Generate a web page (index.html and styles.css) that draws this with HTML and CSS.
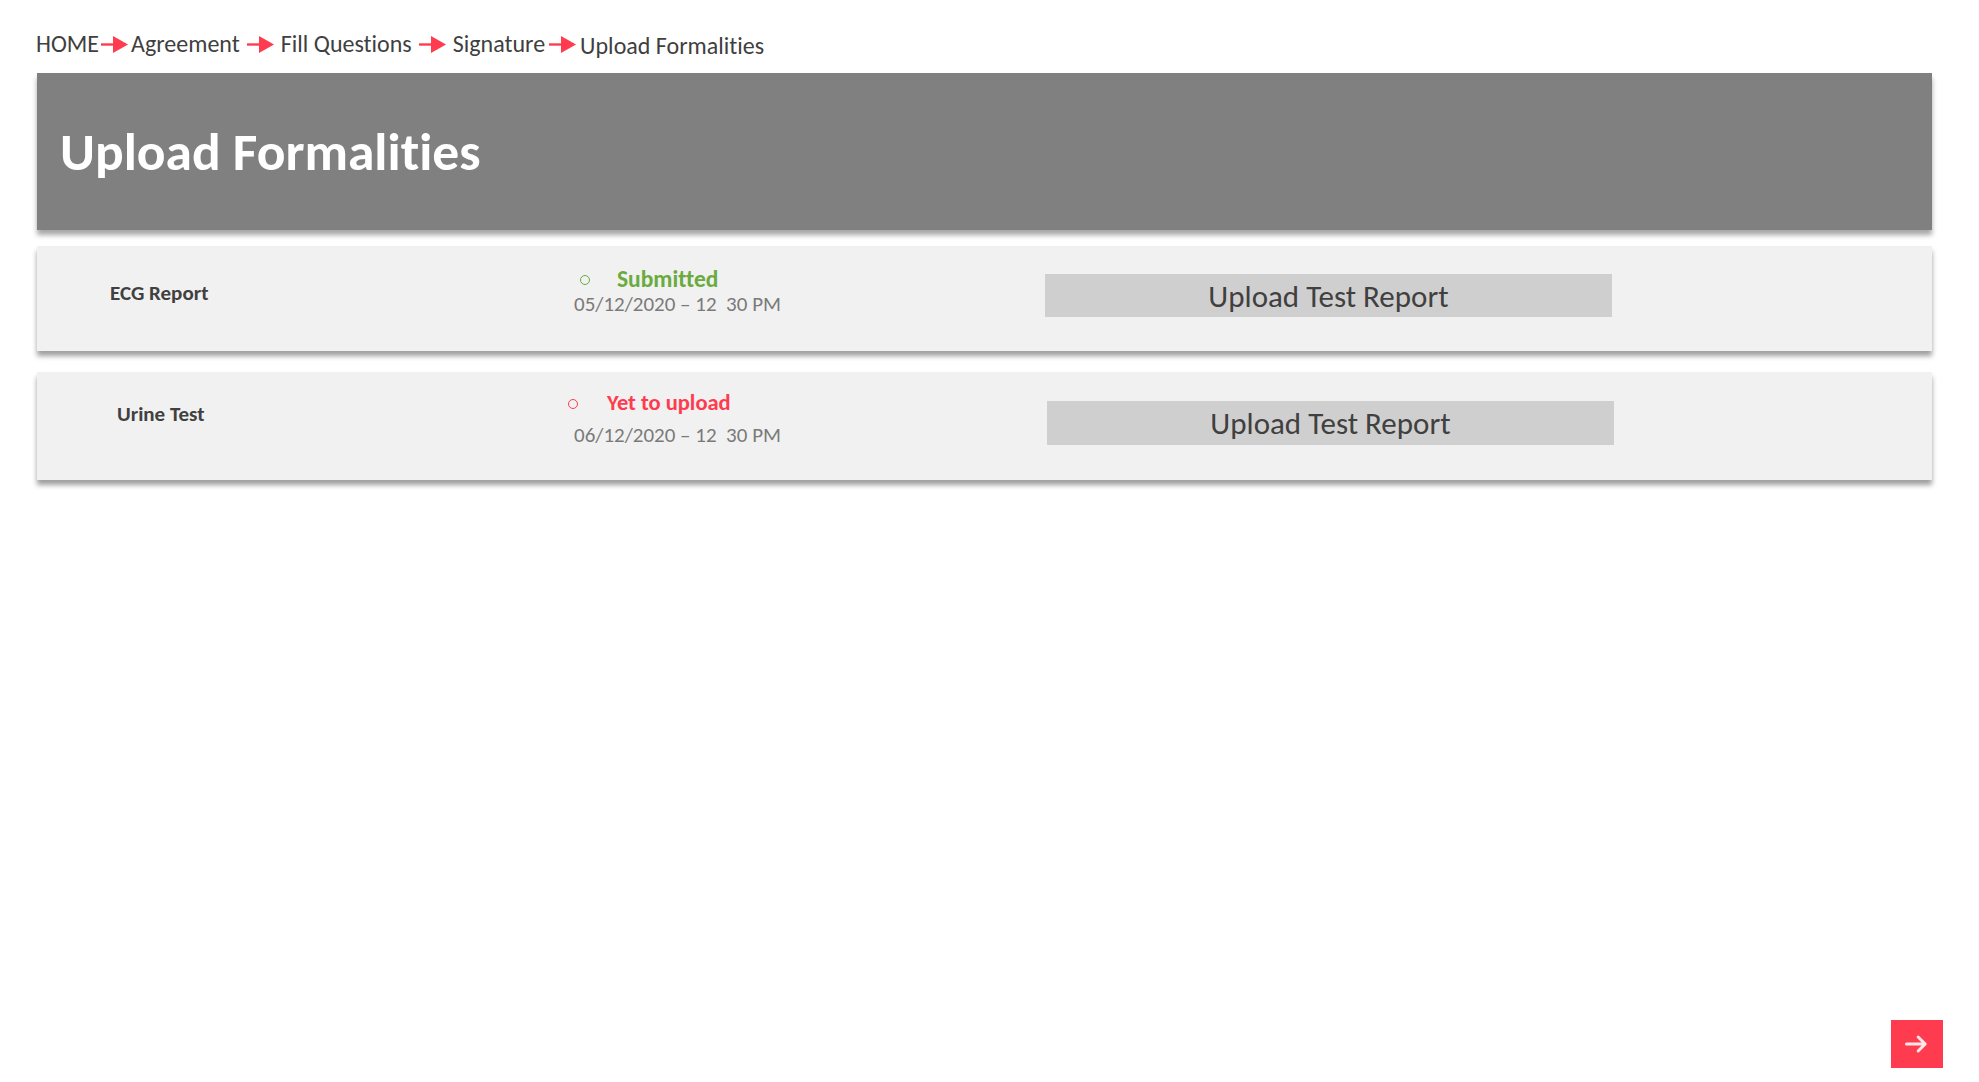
FILE: index.html
```html
<!DOCTYPE html>
<html lang="en">
<head>
<meta charset="utf-8">
<title>Upload Formalities</title>
<link rel="stylesheet" href="styles.css">
</head>
<body>
<div class="page">
  <nav class="crumbs">
    <span class="crumb">HOME</span>
    <svg class="arr first" viewBox="0 0 27 18"><path d="M0 9.5h14" stroke="#ff3b4f" stroke-width="2.4"/><path d="M12 1l15 8.5-15 8.5z" fill="#ff3b4f"/></svg>
    <span class="crumb">Agreement</span>
    <svg class="arr gap" viewBox="0 0 27 18"><path d="M0 9.5h14" stroke="#ff3b4f" stroke-width="2.4"/><path d="M12 1l15 8.5-15 8.5z" fill="#ff3b4f"/></svg>
    <span class="crumb">Fill Questions</span>
    <svg class="arr gap" viewBox="0 0 27 18"><path d="M0 9.5h14" stroke="#ff3b4f" stroke-width="2.4"/><path d="M12 1l15 8.5-15 8.5z" fill="#ff3b4f"/></svg>
    <span class="crumb">Signature</span>
    <svg class="arr" viewBox="0 0 27 18"><path d="M0 9.5h14" stroke="#ff3b4f" stroke-width="2.4"/><path d="M12 1l15 8.5-15 8.5z" fill="#ff3b4f"/></svg>
    <span class="crumb last">Upload Formalities</span>
  </nav>

  <header class="banner">
    <h1>Upload Formalities</h1>
  </header>

  <section class="list">
    <div class="row">
      <div class="name">ECG Report</div>
      <div class="status">
        <div class="state ok"><span class="dot"></span>Submitted</div>
        <div class="date">05/12/2020 – 12&nbsp; 30 PM</div>
      </div>
      <div class="action"><button class="upload">Upload Test Report</button></div>
    </div>
    <div class="row second">
      <div class="name">Urine Test</div>
      <div class="status">
        <div class="state bad"><span class="dot"></span>Yet to upload</div>
        <div class="date">06/12/2020 – 12&nbsp; 30 PM</div>
      </div>
      <div class="action"><button class="upload">Upload Test Report</button></div>
    </div>
  </section>
</div>
<button class="next" aria-label="Next">
  <svg viewBox="0 0 24 24"><path d="M3 12h16M13 6l6 6-6 6" fill="none" stroke="#ffe6e8" stroke-width="2.6" stroke-linecap="round" stroke-linejoin="round"/></svg>
</button>
</body>
</html>
```

FILE: styles.css
```css
* { box-sizing: border-box; }
html, body { margin: 0; padding: 0; background: #ffffff; }
body {
  font-family: Carlito, Lato, "Open Sans", sans-serif;
  font-variant-ligatures: none;
  color: #404040;
  width: 1979px;
  height: 1082px;
  position: relative;
  overflow: hidden;
}
.page { padding: 28px 47px 0 36px; }

.crumbs {
  display: flex;
  align-items: center;
  height: 32px;
  font-size: 24px;
  color: #3f3f3f;
  margin-bottom: 13px;
}
.crumb { line-height: 32px; }
.crumb.last { margin-top: 3px; }
.arr { width: 27px; height: 18px; margin: 0 4px 0 4px; }
.arr.first { margin: 0 3px 0 2px; }
.arr.gap { margin-left: 7px; margin-right: 7px; }

.banner {
  background: #808080;
  height: 157px;
  display: flex;
  align-items: center;
  padding-left: 23px;
  margin-left: 1px;
  box-shadow: 0 5px 5px rgba(0, 0, 0, 0.35);
}
.banner h1 {
  margin: 0;
  color: #ffffff;
  font-size: 53.5px;
  font-weight: 700;
}

.list { display: flex; flex-direction: column; gap: 21px; margin-top: 16px; margin-left: 1px; }
.row {
  background: #f1f1f1;
  height: 105px;
  display: grid;
  grid-template-columns: 537px 471px 1fr;
  align-items: center;
  box-shadow: 0 5px 5px rgba(0, 0, 0, 0.38);
}
.row.second { height: 108px; }
.name {
  padding-left: 73px;
  font-size: 21px;
  font-weight: 700;
  color: #404040;
  margin-top: -12px;
}
.second .name { padding-left: 80px; margin-top: -24px; }
.status { display: flex; flex-direction: column; margin-top: -14px; }
.second .status { margin-top: -14px; }
.state {
  display: flex;
  align-items: center;
  font-size: 23.5px;
  font-weight: 700;
  line-height: 24px;
  padding-left: 6px;
}
.state .dot {
  width: 10px; height: 10px;
  border-radius: 50%;
  border: 1.5px solid currentColor;
  margin-right: 27px;
  margin-top: 3px;
}
.state.ok { color: #6aab3e; }
.state.bad { color: #ff3b4f; padding-left: 0; margin-left: -6px; font-size: 22.5px; }
.state.bad .dot { margin-right: 29px; }
.date {
  font-size: 21px;
  color: #7a7a7a;
  line-height: 26px;
}
.second .date { margin-top: 7px; }
.action { margin-top: -6px; }
.second .action { padding-left: 2px; margin-top: -6px; }
.upload {
  width: 567px;
  height: 43px;
  border: none;
  background: #d0cfcf;
  font-family: inherit;
  font-variant-ligatures: none;
  font-size: 31px;
  color: #404040;
  padding: 0;
}
.second .upload { height: 44px; }

.next {
  position: absolute;
  left: 1891px;
  top: 1020px;
  width: 52px;
  height: 48px;
  background: #ff3b4f;
  border: none;
  padding: 0;
  display: flex;
  align-items: center;
  justify-content: center;
}
.next svg { width: 28px; height: 28px; }
```
